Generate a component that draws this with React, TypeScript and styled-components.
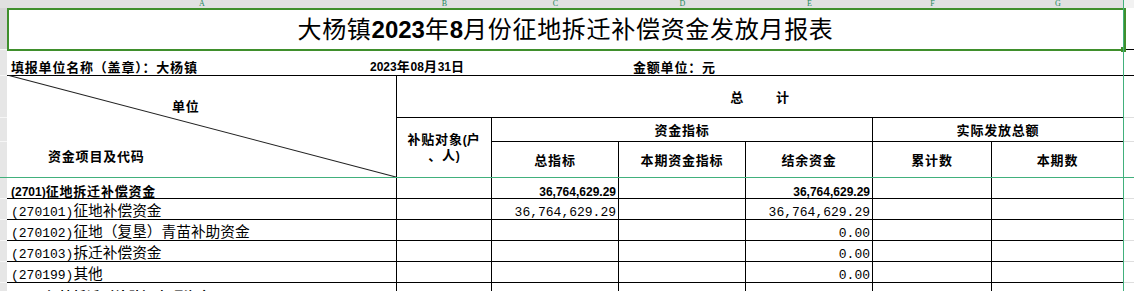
import React from "react";
import styled, { createGlobalStyle, css } from "styled-components";

const GlobalStyle = createGlobalStyle`
  html, body { margin: 0; padding: 0; background: #ffffff; overflow: hidden; }
  body { font-family: "Noto Sans CJK SC", "Liberation Sans", sans-serif; color: #000; }
`;

const COLS = ["7px", "390px", "95px", "127px", "127px", "127px", "119px", "132px", "1fr"];
const ROWS = ["8px", "42px", "26px", "42px", "24px", "36px", "21px", "21px", "21px", "21px", "21px", "21px"];

const GREEN = "#3f8f2c";
const FREEZE = "#41b07c";

type Place = { $c: number; $r: number; $cs?: number; $rs?: number };

const place = css<Place>`
  grid-column: ${(p) => p.$c} / span ${(p) => p.$cs ?? 1};
  grid-row: ${(p) => p.$r} / span ${(p) => p.$rs ?? 1};
  box-sizing: border-box;
  min-width: 0;
`;

const Sheet = styled.div`
  position: relative;
  width: 1134px;
  height: 291px;
  overflow: hidden;
  display: grid;
  grid-template-columns: ${COLS.join(" ")};
  grid-template-rows: ${ROWS.join(" ")};
`;

/* ---------- spreadsheet chrome ---------- */

const ColLetter = styled.div<Place & { $spare?: boolean }>`
  ${place};
  background: ${(p) => (p.$spare ? "#f2f2f2" : "#e1e1e1")};
  display: flex;
  justify-content: center;
  align-items: flex-end;
  font-family: "Liberation Serif", serif;
  font-size: 8px;
  line-height: 8px;
  color: #23875a;
`;

const LetterGlyph = styled.span`
  display: block;
`;

const RowNum = styled.div<Place & { $active?: boolean }>`
  ${place};
  background: ${(p) => (p.$active ? "#d5d5d5" : "#e6e6e6")};
  border-bottom: 1px solid #f6f6f6;
`;

const SpareCell = styled.div<Place & { $strong?: boolean }>`
  ${place};
  border-bottom: 1px solid ${(p) => (p.$strong ? "#000" : "#dedede")};
`;

const FreezeV = styled.div`
  position: absolute;
  left: 1123px;
  top: 0;
  bottom: 0;
  width: 1px;
  background: ${FREEZE};
  z-index: 4;
`;

const FreezeH = styled.div`
  position: absolute;
  top: 177px;
  left: 0;
  right: 0;
  height: 1px;
  background: ${FREEZE};
  z-index: 4;
`;

/* ---------- text runs ---------- */

type Variant = "title" | "bold" | "regular";

const Latin = styled.span<{ $v: Variant }>`
  ${(p) =>
    p.$v === "title"
      ? css`
          font-family: "Liberation Sans", Arial, sans-serif;
          font-weight: 700;
          font-size: 24px;
        `
      : p.$v === "bold"
      ? css`
          font-family: "Liberation Sans", Arial, sans-serif;
          font-weight: 700;
          font-size: 12px;
        `
      : css`
          font-family: "Liberation Mono", monospace;
          font-weight: 400;
          font-size: 13px;
        `}
`;

const Han = styled.span<{ $v: Variant }>`
  font-family: "Noto Sans CJK SC", sans-serif;
  ${(p) =>
    p.$v === "title"
      ? css`
          font-weight: 400;
          font-size: 24px;
          letter-spacing: 0.7px;
        `
      : p.$v === "bold"
      ? css`
          font-weight: 700;
          font-size: 13px;
          letter-spacing: 0.8px;
        `
      : css`
          font-weight: 400;
          font-size: 14.7px;
        `}
`;

const Text = styled.span`
  display: block;
  white-space: nowrap;
  font-size: 12px;
  line-height: 1;
`;

function Mixed({ text, v }: { text: string; v: Variant }) {
  const parts = text.match(/[\x00-\x7F]+|[^\x00-\x7F]+/g) ?? [];
  return (
    <Text>
      {parts.map((part, i) =>
        /^[\x00-\x7F]/.test(part) ? (
          <Latin key={i} $v={v}>
            {part}
          </Latin>
        ) : (
          <Han key={i} $v={v}>
            {part}
          </Han>
        )
      )}
    </Text>
  );
}

/* ---------- report cells ---------- */

const TitleCell = styled.div<Place>`
  ${place};
  position: relative;
  display: flex;
  align-items: center;
  justify-content: center;
  border-bottom: 1px solid #000;
  &::after {
    content: "";
    position: absolute;
    left: 0;
    top: 0;
    right: -2px;
    bottom: -2px;
    border: 2px solid ${GREEN};
    pointer-events: none;
    z-index: 2;
  }
  &::before {
    content: "";
    position: absolute;
    right: -2px;
    bottom: -3px;
    width: 5px;
    height: 5px;
    background: ${GREEN};
    z-index: 3;
  }
`;

const InfoBar = styled.div<Place>`
  ${place};
  display: grid;
  grid-template-columns: 359px 263px auto;
  align-items: end;
  padding: 0 0 2px 4px;
  border-bottom: 1px solid #000;
`;

type Align = "left" | "center" | "right";
const justify: Record<Align, string> = { left: "flex-start", center: "center", right: "flex-end" };

const TableCell = styled.div<Place & { $align?: Align; $middle?: boolean }>`
  ${place};
  display: flex;
  justify-content: ${(p) => justify[p.$align ?? "left"]};
  align-items: ${(p) => (p.$middle ? "center" : "flex-end")};
  padding: ${(p) => (p.$middle ? "0 2px" : "0 2px 0 4px")};
  border-right: 1px solid #000;
  border-bottom: 1px solid #000;
`;

const DiagCell = styled.div<Place>`
  ${place};
  position: relative;
  display: flex;
  flex-direction: column;
  justify-content: space-between;
  padding: 23px 0 15px 0;
  border-right: 1px solid #000;
  border-bottom: 1px solid #000;
`;

const DiagLine = styled.svg`
  position: absolute;
  inset: -1px 0 0 0;
  width: 100%;
  height: calc(100% + 1px);
  pointer-events: none;
`;

const DiagLabel = styled.div<{ $indent: number }>`
  padding-left: ${(p) => p.$indent}px;
`;

const SpacedPair = styled.div`
  display: flex;
  gap: 32px;
`;

const StackedLines = styled.div`
  display: flex;
  flex-direction: column;
  align-items: center;
  gap: 1px;
  & > span {
    line-height: 1.1;
  }
`;

/* ---------- data ---------- */

type Row = { label: string; bold?: boolean; c?: string; e?: string };

const DATA: Row[] = [
  { label: "(2701)征地拆迁补偿资金", bold: true, c: "36,764,629.29", e: "36,764,629.29" },
  { label: "(270101)征地补偿资金", c: "36,764,629.29", e: "36,764,629.29" },
  { label: "(270102)征地（复垦）青苗补助资金", e: "0.00" },
  { label: "(270103)拆迁补偿资金", e: "0.00" },
  { label: "(270199)其他", e: "0.00" },
  { label: "(2702)征地拆迁（补助）专项资金", bold: true, e: "0.00" },
];

const LETTERS = ["A", "B", "C", "D", "E", "F", "G"];

export default function App() {
  const firstDataRow = 7;
  return (
    <>
      <GlobalStyle />
      <Sheet>
        {/* column header bar */}
        <ColLetter $c={1} $r={1} />
        {LETTERS.map((l, i) => (
          <ColLetter key={l} $c={i + 2} $r={1}>
            <LetterGlyph>{l}</LetterGlyph>
          </ColLetter>
        ))}
        <ColLetter $c={9} $r={1} $spare />

        {/* row number strip */}
        {ROWS.slice(1).map((_, i) => (
          <RowNum key={i} $c={1} $r={i + 2} $active={i === 0} />
        ))}

        {/* title */}
        <TitleCell $c={2} $r={2} $cs={7}>
          <Mixed v="title" text="大杨镇2023年8月份征地拆迁补偿资金发放月报表" />
        </TitleCell>
        <SpareCell $c={9} $r={2} $strong />

        {/* info line */}
        <InfoBar $c={2} $r={3} $cs={8}>
          <Mixed v="bold" text="填报单位名称（盖章）：大杨镇" />
          <Mixed v="bold" text="2023年08月31日" />
          <Mixed v="bold" text="金额单位：元" />
        </InfoBar>

        {/* header block */}
        <DiagCell $c={2} $r={4} $rs={3}>
          <DiagLine viewBox="0 0 100 100" preserveAspectRatio="none">
            <line x1="0" y1="0" x2="100" y2="100" stroke="#222" strokeWidth="1.1" vectorEffect="non-scaling-stroke" />
          </DiagLine>
          <DiagLabel $indent={165}>
            <Mixed v="bold" text="单位" />
          </DiagLabel>
          <DiagLabel $indent={41}>
            <Mixed v="bold" text="资金项目及代码" />
          </DiagLabel>
        </DiagCell>

        <TableCell $c={3} $r={4} $cs={6} $align="center" $middle>
          <SpacedPair>
            <Mixed v="bold" text="总" />
            <Mixed v="bold" text="计" />
          </SpacedPair>
        </TableCell>
        <SpareCell $c={9} $r={4} />

        <TableCell $c={3} $r={5} $rs={2} $align="center" $middle>
          <StackedLines>
            <Mixed v="bold" text="补贴对象(户" />
            <Mixed v="bold" text="、人)" />
          </StackedLines>
        </TableCell>
        <TableCell $c={4} $r={5} $cs={3} $align="center" $middle>
          <Mixed v="bold" text="资金指标" />
        </TableCell>
        <TableCell $c={7} $r={5} $cs={2} $align="center" $middle>
          <Mixed v="bold" text="实际发放总额" />
        </TableCell>
        <SpareCell $c={9} $r={5} />

        {["总指标", "本期资金指标", "结余资金", "累计数", "本期数"].map((h, i) => (
          <TableCell key={h} $c={i + 4} $r={6} $align="center" $middle>
            <Mixed v="bold" text={h} />
          </TableCell>
        ))}
        <SpareCell $c={9} $r={6} />

        {/* data rows */}
        {DATA.map((row, i) => {
          const r = firstDataRow + i;
          const v: Variant = row.bold ? "bold" : "regular";
          return (
            <React.Fragment key={row.label}>
              <TableCell $c={2} $r={r}>
                <Mixed v={v} text={row.label} />
              </TableCell>
              <TableCell $c={3} $r={r} />
              <TableCell $c={4} $r={r} $align="right">
                {row.c && <Mixed v={v} text={row.c} />}
              </TableCell>
              <TableCell $c={5} $r={r} />
              <TableCell $c={6} $r={r} $align="right">
                {row.e && <Mixed v={v} text={row.e} />}
              </TableCell>
              <TableCell $c={7} $r={r} />
              <TableCell $c={8} $r={r} />
              <SpareCell $c={9} $r={r} />
            </React.Fragment>
          );
        })}

        <FreezeV />
        <FreezeH />
      </Sheet>
    </>
  );
}
